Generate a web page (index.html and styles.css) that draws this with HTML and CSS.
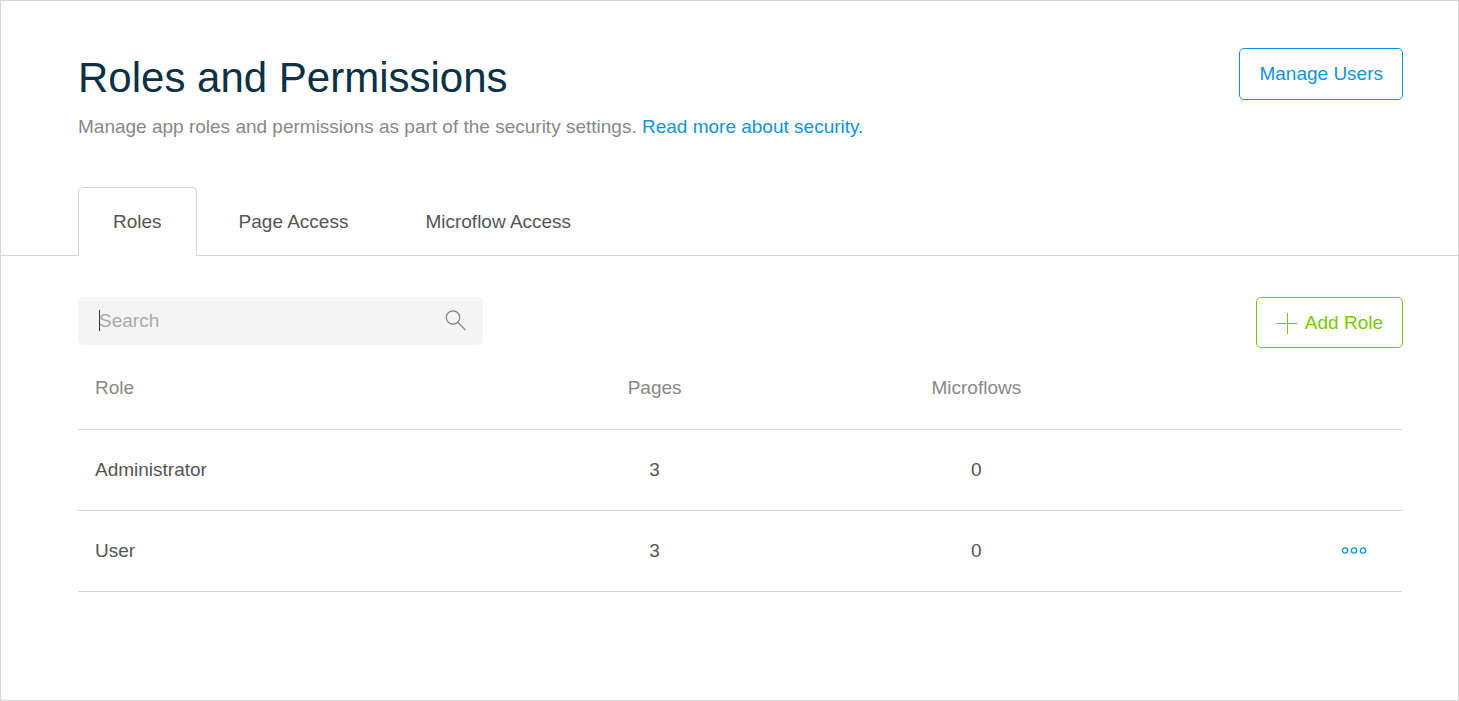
FILE: index.html
```html
<!DOCTYPE html>
<html lang="en">
<head>
<meta charset="utf-8">
<meta name="viewport" content="width=device-width, initial-scale=1">
<title>Roles and Permissions</title>
<link rel="stylesheet" href="styles.css">
</head>
<body>
<main class="page">
  <header class="header">
    <div class="intro">
      <h1 class="title">Roles and Permissions</h1>
      <p class="lead">Manage app roles and permissions as part of the security settings. <a class="link" href="#security">Read more about security.</a></p>
    </div>
    <button class="btn btn-primary" type="button">Manage Users</button>
  </header>

  <nav class="tabs" role="tablist" aria-label="Sections">
    <button class="tab tab-active" type="button" role="tab" aria-selected="true">Roles</button>
    <button class="tab" type="button" role="tab" aria-selected="false">Page Access</button>
    <button class="tab" type="button" role="tab" aria-selected="false">Microflow Access</button>
  </nav>

  <section class="content">
    <div class="toolbar">
      <label class="search">
        <input class="search-input" type="text" placeholder="Search" aria-label="Search">
        <svg class="search-icon" viewBox="0 0 22 22" width="22" height="22" aria-hidden="true">
          <circle cx="8" cy="7.5" r="6.7"/>
          <path d="M12.8 12.3 20.5 20"/>
        </svg>
      </label>
      <button class="btn btn-success" type="button">
        <svg class="plus-icon" viewBox="0 0 22 22" width="22" height="22" aria-hidden="true">
          <path d="M0.5 11.5H21.5M11.5 1V22"/>
        </svg>
        Add Role
      </button>
    </div>

    <table class="table">
      <thead>
        <tr>
          <th class="col-role" scope="col">Role</th>
          <th class="col-count" scope="col">Pages</th>
          <th class="col-count" scope="col">Microflows</th>
          <td class="col-actions"></td>
        </tr>
      </thead>
      <tbody>
        <tr>
          <td class="col-role">Administrator</td>
          <td class="col-count">3</td>
          <td class="col-count">0</td>
          <td class="col-actions"></td>
        </tr>
        <tr>
          <td class="col-role">User</td>
          <td class="col-count">3</td>
          <td class="col-count">0</td>
          <td class="col-actions">
            <button class="more" type="button" aria-label="More actions for User">
              <svg class="more-icon" viewBox="0 0 26 8" width="26" height="8" aria-hidden="true">
                <circle cx="4" cy="3.5" r="2.6"/>
                <circle cx="13" cy="3.5" r="2.6"/>
                <circle cx="22" cy="3.5" r="2.6"/>
              </svg>
            </button>
          </td>
        </tr>
      </tbody>
    </table>
  </section>
</main>
</body>
</html>
```
FILE: styles.css
```css
*,
*::before,
*::after {
  box-sizing: border-box;
}

body {
  margin: 0;
  background: #fff;
  color: #555;
  font: 19px/24px "Liberation Sans", Arial, sans-serif;
}

button,
input {
  font: inherit;
  color: inherit;
}

button {
  cursor: pointer;
}

.page {
  min-height: 100vh;
  border: 1px solid #d6d6d6;
}

.header {
  display: flex;
  justify-content: space-between;
  align-items: flex-start;
  padding: 47px 55px 48px 77px;
}

.title {
  margin: 0 0 11px;
  padding-top: 4px;
  color: #0a3144;
  font-size: 42px;
  font-weight: 400;
  line-height: 52px;
}

.lead {
  margin: 0;
  color: #888;
}

.link {
  color: #0f93de;
  text-decoration: none;
}

.btn {
  display: inline-flex;
  align-items: center;
  gap: 7px;
  padding: 13px 19px;
  border: 1px solid currentColor;
  border-radius: 5px;
  background: #fff;
}

.btn-primary {
  color: #0f93de;
}

.btn-success {
  padding: 13px 19px 12px;
  color: #76ca02;
}

.tabs {
  display: flex;
  gap: 7px;
  padding: 0 77px;
  border-bottom: 1px solid #d6d6d6;
}

.tab {
  margin-bottom: -1px;
  padding: 22px 34px;
  border: 1px solid transparent;
  border-bottom: 0;
  border-radius: 5px 5px 0 0;
  background: none;
}

.tab-active {
  border-color: #d6d6d6;
  background: #fff;
}

.content {
  padding: 41px 56px 41px 77px;
}

.toolbar {
  display: flex;
  justify-content: space-between;
  align-items: flex-start;
  margin-right: -1px;
}

.search {
  position: relative;
  display: flex;
  flex: 0 1 405px;
  align-items: center;
  padding: 0 16px 0 21px;
  border-radius: 5px;
  background: #f4f4f4;
}

/* Insertion caret */
.search::before {
  content: "";
  position: absolute;
  top: 13px;
  left: 21px;
  width: 1px;
  height: 21px;
  background: #333;
}

.search-input {
  flex: 1;
  min-width: 0;
  height: 48px;
  padding: 0;
  border: 0;
  outline: 0;
  background: none;
}

.search-input::placeholder {
  color: #aaa;
  opacity: 1;
}

.search-icon,
.plus-icon,
.more-icon {
  display: block;
  fill: none;
  stroke: currentColor;
}

.search-icon {
  color: #808080;
  stroke-width: 1.2;
}

.more-icon {
  stroke-width: 1.3;
}

.table {
  width: 100%;
  border-collapse: collapse;
  table-layout: fixed;
}

.table th,
.table td {
  height: 81px;
  padding: 0;
  border-bottom: 1px solid #d6d6d6;
  font-weight: 400;
}

.table th {
  color: #888;
}

.table .col-role {
  width: 31.4%;
  padding-left: 17px;
  text-align: left;
}

.table .col-count {
  width: 24.3%;
  text-align: center;
}

.table .col-actions {
  padding-right: 35px;
}

.more {
  display: block;
  margin-left: auto;
  padding: 8px 0;
  border: 0;
  background: none;
  color: #0f93de;
}
```
